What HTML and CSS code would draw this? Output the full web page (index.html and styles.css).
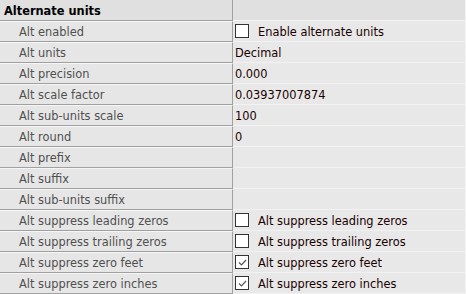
FILE: index.html
```html
<!DOCTYPE html>
<html lang="en">
<head>
  <meta charset="UTF-8" />
  <title>Alternate units</title>
  <link rel="stylesheet" href="styles.css">
</head>
<body>
  <div class="grid">
    <div class="head">Alternate units</div>
    <div class="head-rest"></div>

    <div class="label">Alt enabled</div>
    <div class="value"><span class="check"></span><span class="txt">Enable alternate units</span></div>

    <div class="label">Alt units</div>
    <div class="value"><span class="txt">Decimal</span></div>

    <div class="label">Alt precision</div>
    <div class="value"><span class="txt">0.000</span></div>

    <div class="label">Alt scale factor</div>
    <div class="value"><span class="txt">0.03937007874</span></div>

    <div class="label">Alt sub-units scale</div>
    <div class="value"><span class="txt">100</span></div>

    <div class="label">Alt round</div>
    <div class="value"><span class="txt">0</span></div>

    <div class="label">Alt prefix</div>
    <div class="value"></div>

    <div class="label">Alt suffix</div>
    <div class="value"></div>

    <div class="label">Alt sub-units suffix</div>
    <div class="value"></div>

    <div class="label">Alt suppress leading zeros</div>
    <div class="value"><span class="check"></span><span class="txt">Alt suppress leading zeros</span></div>

    <div class="label">Alt suppress trailing zeros</div>
    <div class="value"><span class="check"></span><span class="txt">Alt suppress trailing zeros</span></div>

    <div class="label">Alt suppress zero feet</div>
    <div class="value"><span class="check"><svg width="11" height="11" viewBox="0 0 11 11"><path d="M2 5.5 L4.5 8 L9 3" fill="none" stroke="#555" stroke-width="1.2"/></svg></span><span class="txt">Alt suppress zero feet</span></div>

    <div class="label">Alt suppress zero inches</div>
    <div class="value"><span class="check"><svg width="11" height="11" viewBox="0 0 11 11"><path d="M2 5.5 L4.5 8 L9 3" fill="none" stroke="#555" stroke-width="1.2"/></svg></span><span class="txt">Alt suppress zero inches</span></div>
  </div>
</body>
</html>
```

FILE: styles.css
```css
* { box-sizing: border-box; }
body {
  margin: 0;
  background: #e8e8e8;
  font-family: "DejaVu Sans", sans-serif;
  font-size: 11.4px;
}

.grid {
  display: grid;
  grid-template-columns: 233px 232px;
  grid-auto-rows: 21px;
  border-right: 1px solid #f4f4f4;
  width: 466px;
}

.head {
  background: #e0e0e0;
  font-weight: bold;
  color: #000;
  padding: 2px 0 0 4px;
  line-height: 18px;
  border-bottom: 1px solid #a0a0a0;
  border-right: 1px solid #a0a0a0;
}

.head-rest {
  background: #e0e0e0;
  border-bottom: 1px solid #f2f2f2;
}

.label {
  background: #e6e6e6;
  color: #505050;
  padding: 1px 0 0 19px;
  border-top: 1px solid #f6f6f6;
  border-bottom: 1px solid #a0a0a0;
  border-right: 1px solid #a0a0a0;
  line-height: 18px;
  white-space: nowrap;
}

.value {
  background: #e8e8e8;
  color: #1a0000;
  padding-left: 2px;
  border-bottom: 1px solid #f2f2f2;
  display: flex;
  align-items: center;
  white-space: nowrap;
}

.txt { padding-top: 2px; }

.check {
  width: 14px;
  height: 14px;
  border: 1px solid #333;
  background: #fff;
  margin-right: 9px;
  display: flex;
  align-items: center;
  justify-content: center;
}
```
